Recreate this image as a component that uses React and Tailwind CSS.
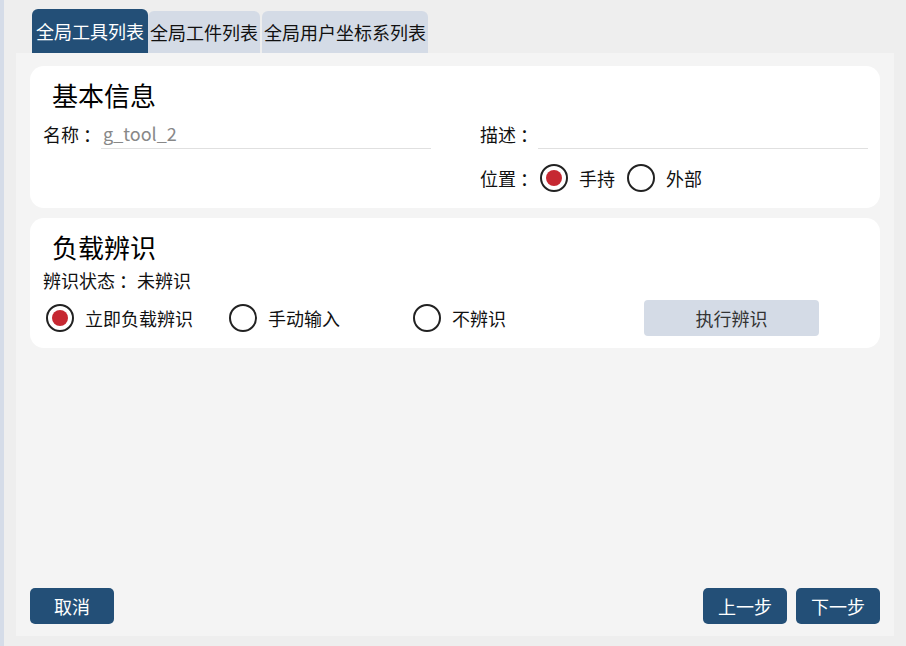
import React from "react";

const FONT = { fontFamily: '"Noto Sans CJK SC", "Microsoft YaHei", "Liberation Sans", sans-serif' };

function Radio({ checked }) {
  return (
    <span className="flex h-[28px] w-[28px] shrink-0 items-center justify-center rounded-full border-[2.5px] border-[#222222] bg-white">
      {checked && <span className="h-[16px] w-[16px] rounded-full bg-[#c62832]" />}
    </span>
  );
}

function RadioOption({ checked, label, className = "" }) {
  return (
    <label className={`flex items-center gap-[11px] ${className}`}>
      <Radio checked={checked} />
      <span className="whitespace-nowrap text-[18px] leading-[28px] text-[#111]">{label}</span>
    </label>
  );
}

function Tab({ active, children }) {
  return (
    <div
      className={
        active
          ? "flex h-[44px] items-center rounded-t-[6px] bg-[#234f77] px-[4px] text-[18px] text-white"
          : "flex h-[42px] items-center rounded-t-[6px] bg-[#d4dbe6] px-[2px] text-[18px] text-[#111]"
      }
    >
      {children}
    </div>
  );
}

function Field({ label, value }) {
  return (
    <div className="flex items-end">
      <span className="w-[58px] shrink-0 whitespace-nowrap text-[18px] leading-[30px] text-[#111]">{label}</span>
      <div className="h-[31px] flex-1 border-b border-[#e0e0e0] pl-[2px] text-[18px] leading-[30px] text-[#888888]">
        {value}
      </div>
    </div>
  );
}

export default function App() {
  return (
    <div className="flex h-[646px] w-[906px] bg-[#eeeeee]" style={FONT}>
      <div className="w-[4px] shrink-0 bg-[#d5dce8]" />
      <div className="flex flex-1 flex-col pl-[12px] pt-[9px]">
        {/* tab strip */}
        <div className="ml-[16px] flex items-end">
          <Tab active>全局工具列表</Tab>
          <Tab>全局工件列表</Tab>
          <div className="w-[2px]" />
          <Tab>全局用户坐标系列表</Tab>
        </div>

        {/* tab body */}
        <div className="flex h-[583px] w-[878px] flex-col bg-[#f4f4f4] px-[14px] pb-[12px] pt-[13px]">
          {/* basic info */}
          <section className="rounded-[14px] bg-white pb-[15px] pl-[13px] pr-[12px] pt-[12px]">
            <h2 className="ml-[9px] text-[26px] leading-[34px] text-black">基本信息</h2>
            <div className="mt-[6px] grid grid-cols-2 gap-x-[49px]">
              <div>
                <Field label="名称 ：" value="g_tool_2" />
              </div>
              <div>
                <Field label="描述 ：" value="" />
                <div className="mt-[14px] flex h-[30px] items-center">
                  <span className="w-[60px] shrink-0 whitespace-nowrap text-[18px] text-[#111]">位置 ：</span>
                  <RadioOption checked label="手持" />
                  <RadioOption label="外部" className="ml-[12px]" />
                </div>
              </div>
            </div>
          </section>

          {/* load identification */}
          <section className="mt-[10px] rounded-[14px] bg-white pb-[12px] pl-[13px] pr-[12px] pt-[12px]">
            <h2 className="ml-[9px] text-[26px] leading-[34px] text-black">负载辨识</h2>
            <div className="mt-[4px] flex whitespace-nowrap text-[18px] leading-[24px] text-[#111]">
              <span>辨识状态 ：</span>
              <span>未辨识</span>
            </div>
            <div className="mt-[8px] flex h-[36px] items-center pl-[3px]">
              <RadioOption checked label="立即负载辨识" className="w-[183px]" />
              <RadioOption label="手动输入" className="w-[184px]" />
              <RadioOption label="不辨识" className="w-[231px]" />
              <button className="h-[36px] w-[175px] rounded-[4px] bg-[#d4dbe6] text-[18px] text-[#333]">
                执行辨识
              </button>
            </div>
          </section>

          <div className="flex-1" />

          {/* footer actions */}
          <div className="flex items-center">
            <button className="h-[36px] w-[84px] rounded-[5px] bg-[#234f77] text-[18px] text-white">取消</button>
            <div className="flex-1" />
            <button className="h-[36px] w-[84px] rounded-[5px] bg-[#234f77] text-[18px] text-white">上一步</button>
            <button className="ml-[9px] h-[36px] w-[84px] rounded-[5px] bg-[#234f77] text-[18px] text-white">下一步</button>
          </div>
        </div>
      </div>
    </div>
  );
}
